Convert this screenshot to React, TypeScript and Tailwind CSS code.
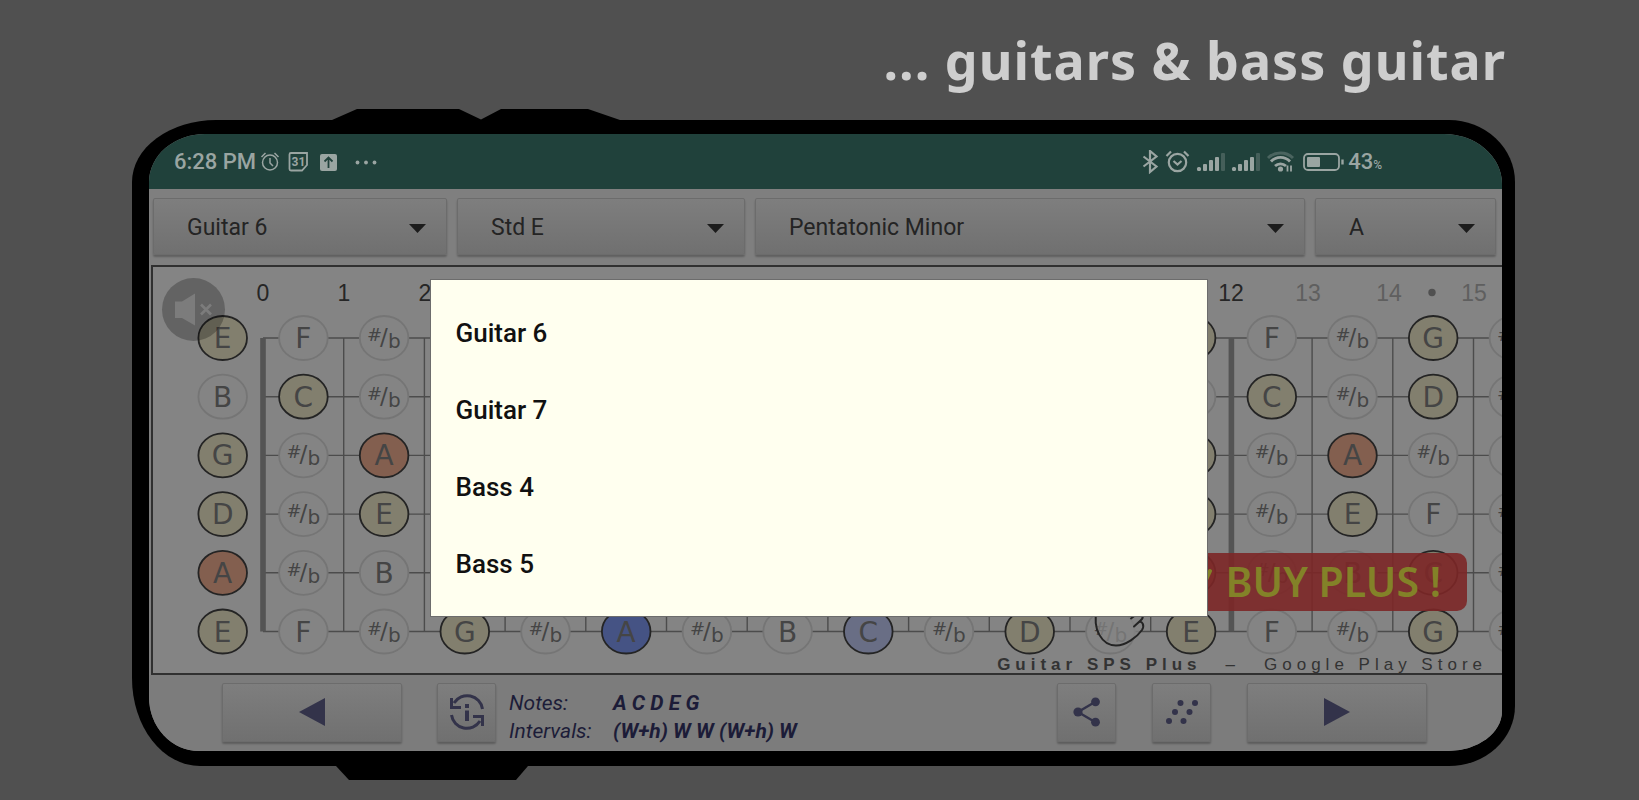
import React, { useState } from 'react';

const INSTRUMENTS = ['Guitar 6', 'Guitar 7', 'Bass 4', 'Bass 5'];

const NOTES = ['C', '#', 'D', '#', 'E', 'F', '#', 'G', '#', 'A', '#', 'B'];
const SCALE = ['A', 'C', 'D', 'E', 'G'];
// open strings from top to bottom, as indexes in NOTES
const STRINGS = [4, 11, 7, 2, 9, 4];

const NUT_X = 110;
const FRET_W = 80.7;
const STRING_Y = 71;
const STRING_H = 58.7;

const FRET_LABELS = [
  { n: 0, x: 110 }, { n: 1, x: 191 }, { n: 2, x: 272 }, { n: 3, x: 352 },
  { n: 5, x: 514 }, { n: 7, x: 675 }, { n: 9, x: 837 }, { n: 12, x: 1078 },
  { n: 13, x: 1155, dim: true }, { n: 14, x: 1236, dim: true }, { n: 15, x: 1321, dim: true },
];

const noteFill = (note: string, col: number) => {
  const inBox = col >= 5 && col <= 8;
  if (note === 'A') return inBox ? '#455384' : '#835f4f';
  if (!SCALE.includes(note)) return '#848484';
  return inBox ? '#696e85' : '#827f6e';
};

const Note: React.FC<{ note: string; x: number; y: number; col: number }> = ({ note, x, y, col }) => {
  const active = SCALE.includes(note);
  return (
    <g>
      <ellipse
        cx={x}
        cy={y}
        rx={24.3}
        ry={22}
        fill={noteFill(note, col)}
        stroke={active ? '#242424' : '#757575'}
        strokeWidth={1.8}
      />
      {note === '#' ? (
        <g fill="#454545" fontFamily='"DejaVu Sans", sans-serif'>
          <text x={x - 17} y={y + 3} fontSize="18">#</text>
          <text x={x - 4} y={y + 7} fontSize="23">/</text>
          <text x={x + 4} y={y + 10} fontSize="20">b</text>
        </g>
      ) : (
        <text x={x} y={y + 10} textAnchor="middle" fontSize="28" fill="#454545" fontFamily='"DejaVu Sans", sans-serif'>
          {note}
        </text>
      )}
    </g>
  );
};

const Fretboard: React.FC = () => {
  const frets = Array.from({ length: 17 }, (_, i) => i);
  return (
    <svg className="block h-full w-full" role="img" aria-label="Fretboard">
      {FRET_LABELS.map(({ n, x, dim }) => (
        <text key={n} x={x} y={34} textAnchor="middle" fontSize="23" fill={dim ? '#5f5f5f' : '#262626'} fontFamily='"Liberation Sans", sans-serif'>
          {n}
        </text>
      ))}
      <circle cx={1279} cy={25.5} r={3.7} fill="#505050" />

      {STRINGS.map((_, i) => (
        <line key={i} x1={NUT_X} x2="100%" y1={STRING_Y + i * STRING_H} y2={STRING_Y + i * STRING_H} stroke="#4c4c4c" strokeWidth={1.4} />
      ))}
      {frets.map((i) => (
        <line
          key={i}
          x1={NUT_X + i * FRET_W}
          x2={NUT_X + i * FRET_W}
          y1={STRING_Y}
          y2={STRING_Y + 5 * STRING_H}
          stroke={i % 12 === 0 ? '#545454' : '#4c4c4c'}
          strokeWidth={i % 12 === 0 ? 5.6 : 1.4}
        />
      ))}
      {STRINGS.map((open, s) =>
        frets.map((f) => (
          <Note key={`${s}-${f}`} note={NOTES[(open + f) % 12]} col={f} x={NUT_X - 40.3 + f * FRET_W} y={STRING_Y + s * STRING_H} />
        ))
      )}

      {/* pointing hand under the buy banner */}
      <path
        d="M943 345C940 362 949 378.500 963 378.500C973 378.500 984 370 989 363C992 359 990 355 986 354L981 359L989 352C991 347 987 344 984 347L978 351L983 345V340H943z"
        fill="#848484"
        fillOpacity={0.75}
      />
      <path
        d="M944 343C939 362 949 378.500 963 378.500C973 378.500 984 370 989 363C992 358 989 354 986 355L981 359.500M978 351.500L984 347C988 344 991 349 989 352L986 355"
        fill="none"
        stroke="#242424"
        strokeWidth={2}
        strokeLinecap="round"
      />
    </svg>
  );
};

const StatusIconsLeft: React.FC = () => (
  <svg className="h-6 w-[120px]" viewBox="0 0 120 24" fill="none" stroke="#9aa5a2" aria-hidden="true">
    <circle cx="10" cy="12.500" r="7.500" strokeWidth="1.500" />
    <path d="M10 8v5l3 3M1.500 7l4-4M18.500 7l-4-4" strokeWidth="1.500" />
    <path d="M31 3h16v12l-5 5.500H31a1.500 1.500 0 0 1-1.500-1.500V4.500A1.500 1.500 0 0 1 31 3z" strokeWidth="1.800" />
    <text x="38.500" y="16" textAnchor="middle" fontSize="12" fontWeight="700" fill="#9aa5a2" stroke="none" fontFamily="Roboto, sans-serif">31</text>
    <rect x="60" y="4" width="17" height="17" rx="2" fill="#9aa5a2" stroke="none" />
    <path d="M68.500 18V8M64.500 11.500l4-4 4 4" stroke="#20413b" strokeWidth="1.800" />
    <g fill="#9aa5a2" stroke="none">
      <circle cx="97.500" cy="12.500" r="1.900" />
      <circle cx="106" cy="12.500" r="1.900" />
      <circle cx="114.500" cy="12.500" r="1.900" />
    </g>
  </svg>
);

const Signal: React.FC<{ x: number }> = ({ x }) => (
  <g fill="#9aa5a2" stroke="none">
    <rect x={x} y="17" width="4" height="4" rx="1.500" />
    <rect x={x + 6} y="14" width="4" height="7" rx="1" />
    <rect x={x + 12} y="10" width="4" height="11" rx="1" />
    <rect x={x + 18} y="7" width="4" height="14" rx="1" />
    <rect x={x + 24} y="3" width="4" height="18" rx="1" opacity="0.3" />
  </g>
);

const StatusIconsRight: React.FC = () => (
  <svg className="h-6 w-[202px]" viewBox="0 0 202 24" fill="none" stroke="#9aa5a2" strokeWidth="2.200" aria-hidden="true">
    <path d="M1.500 6.500l13 10-6.500 5.500V1l6.500 5.500-13 10" />
    <circle cx="35.500" cy="12.500" r="8.700" />
    <path d="M31.500 11l4 3.500 4-3.500M24.500 6l4.500-4.500M46.500 6L42 1.500" />
    <Signal x={55} />
    <Signal x={90} />
    <path d="M126 8a18 18 0 0 1 25 0" opacity="0.35" strokeWidth="3" />
    <path d="M129 11.500a13 13 0 0 1 19 0M133 16a8 8 0 0 1 11 0" strokeWidth="2.800" />
    <circle cx="138.500" cy="19" r="2.600" fill="#9aa5a2" stroke="none" />
    <path d="M145.500 15.500v6M149 15.500v6" strokeWidth="1.800" />
    <rect x="162" y="4" width="35" height="16" rx="4" strokeWidth="1.800" />
    <rect x="165" y="7" width="13" height="10" rx="1" fill="#9aa5a2" stroke="none" />
    <path d="M200.500 9.500v5" strokeWidth="2.400" />
  </svg>
);

const Picker: React.FC<{ label: string; options: string[] }> = ({ label, options }) => (
  <div className="relative">
    <select
      aria-label={label}
      className="h-[57px] w-full appearance-none rounded-xs border border-[#6c6c6c] bg-linear-to-b from-[#7e7e7e] to-[#707070] pt-[4px] pl-[33px] text-[23px] text-[#242424] shadow-[0_2px_2px_rgba(0,0,0,0.25)]"
    >
      {options.map((o) => (
        <option key={o}>{o}</option>
      ))}
    </select>
    <svg className="pointer-events-none absolute top-[26px] right-[21px] h-[9px] w-[17px]" viewBox="0 0 17 9" aria-hidden="true">
      <path d="M0 0h17L8.500 9z" fill="#1c1c1c" />
    </svg>
  </div>
);

const ToolButton: React.FC<{ label: string; wide?: boolean; children: React.ReactNode }> = ({ label, wide, children }) => (
  <button
    aria-label={label}
    className={`flex h-[59px] shrink-0 items-center justify-center rounded-xs border border-[#6c6c6c] bg-linear-to-b from-[#7e7e7e] to-[#707070] shadow-[0_2px_2px_rgba(0,0,0,0.25)] ${wide ? 'w-[180px]' : 'w-[59px]'}`}
  >
    {children}
  </button>
);

const App: React.FC = () => {
  const [open, setOpen] = useState(true);

  return (
    <main className="relative min-h-screen overflow-hidden bg-[#505050] pr-[124px] pl-[132px] font-[Roboto,sans-serif]">
      <h1 className="h-[120px] pt-[28px] pr-[9px] text-right font-['Noto_Sans',sans-serif] text-[52px] leading-[64px] font-bold tracking-[1px] text-[#cecece]">
        ... guitars &amp; bass guitar
      </h1>

      <div className="relative rounded-[84px_66px_66px_68px/62px_62px_60px_88px] bg-black pt-[14px] pr-[13px] pb-[15px] pl-[17px]">
        <svg className="absolute -top-[11px] left-[200px] h-[12px] w-[289px]" viewBox="0 0 289 12" aria-hidden="true">
          <path d="M0 12V11L25 0H127L149 10.500L169 0H256L288 11V12z" fill="#000" />
        </svg>
        <svg className="absolute -bottom-[14px] left-[204px] h-[15px] w-[192px]" viewBox="0 0 192 15" aria-hidden="true">
          <path d="M0 0V1L13 15H180L192 1V0z" fill="#000" />
        </svg>

        <div className="overflow-hidden rounded-[56px_58px_54px_50px/48px_50px_40px_54px] bg-[#7f7f7f]">
          <div className="flex h-[55px] items-center bg-[#20413b] pl-[25px] text-[22px] font-medium text-[#9aa5a2]">
            <span>6:28 PM</span>
            <div className="ml-[4px]"><StatusIconsLeft /></div>
            <div className="mr-[4px] ml-auto"><StatusIconsRight /></div>
            <span className="mr-[120px]">43<span className="text-[12px]">%</span></span>
          </div>

          <div className="grid grid-cols-[294fr_288fr_550fr_181fr] gap-[10px] pt-[9px] pr-[6px] pb-[10px] pl-[4px]">
            <Picker label="Instrument" options={INSTRUMENTS} />
            <Picker label="Tuning" options={['Std E', 'Drop D']} />
            <Picker label="Scale" options={['Pentatonic Minor', 'Pentatonic Major']} />
            <Picker label="Root note" options={['A', 'B', 'C', 'D', 'E', 'F', 'G']} />
          </div>

          <div className="relative ml-[2px] h-[410px] overflow-hidden border-y-2 border-l-2 border-[#303030] bg-[#848484]">
            <Fretboard />
            <button aria-label="Sound off" className="absolute top-[11px] left-[9px] h-[63px] w-[63px] rounded-full bg-black/25">
              <svg className="h-full w-full" viewBox="0 0 63 63" aria-hidden="true">
                <path d="M13 23.500h7L33 15.500v32L20 40h-7z" fill="#7c7c7c" />
                <path d="M39 26.500l10 10M49 26.500l-10 10" stroke="#7c7c7c" strokeWidth="2.600" />
              </svg>
            </button>
            <button className="absolute right-[35px] bottom-[62px] flex h-[58px] items-center gap-[12px] rounded-[10px] bg-[#7c2727]/90 px-[26px] pb-[2px] font-['Noto_Sans',sans-serif] text-[41px] leading-none font-semibold text-[#838228]">
              <svg className="h-[30px] w-[30px]" viewBox="0 0 30 30" fill="none" stroke="#838228" strokeWidth="4" strokeLinecap="round" aria-hidden="true">
                <path d="M8 18l8 9L26 5" />
              </svg>
              BUY PLUS !
            </button>
            <p className="absolute right-[15px] bottom-0 flex items-baseline gap-[24px] font-['Liberation_Sans',sans-serif] text-[17px] leading-[17px] tracking-[5px] text-[#333333]">
              <b>Guitar SPS Plus</b>
              <span>–</span>
              <span>Google Play Store</span>
            </p>
          </div>

          <div className="flex h-[76px] items-center bg-[#7c7c7c] pr-[75px] pb-[2px] pl-[73px]">
            <ToolButton label="Previous" wide>
              <svg className="h-[28px] w-[26px]" viewBox="0 0 26 28" aria-hidden="true"><path d="M26 0v28L0 14z" fill="#33334a" /></svg>
            </ToolButton>
            <div className="ml-[35px] flex items-center gap-[13px]">
              <ToolButton label="Toggle info">
                <svg className="h-9 w-9" viewBox="0 0 36 36" fill="none" stroke="#33334a" strokeWidth="3" aria-hidden="true">
                  <path d="M5 9A15.500 15.500 0 0 1 33.500 15M31 27A15.500 15.500 0 0 1 2.500 21" />
                  <path d="M2.500 4v9.500H12M33.500 32v-9.500H24" />
                  <path d="M18 10v4M18 16.500V27" strokeWidth="4" />
                </svg>
              </ToolButton>
              <dl className="grid grid-cols-[104px_auto] pt-[10px] text-[21px] leading-[28px] text-[#1c1c38] italic">
                <dt>Notes:</dt>
                <dd className="font-bold">A C D E G</dd>
                <dt>Intervals:</dt>
                <dd className="font-bold">(W+h) W W (W+h) W</dd>
              </dl>
            </div>
            <div className="ml-auto flex items-center gap-[36px]">
              <ToolButton label="Share">
                <svg className="h-[30px] w-[28px]" viewBox="0 0 28 30" fill="#33334a" aria-hidden="true">
                  <path d="M22 5L5 15l17 10" fill="none" stroke="#33334a" strokeWidth="2.400" />
                  <circle cx="5" cy="15" r="4.600" />
                  <circle cx="22.500" cy="4.800" r="4.400" />
                  <circle cx="22.500" cy="25.200" r="4.400" />
                </svg>
              </ToolButton>
              <ToolButton label="Patterns">
                <svg className="h-6 w-8" viewBox="0 0 32 24" fill="#33334a" aria-hidden="true">
                  <circle cx="14.500" cy="3" r="3" /><circle cx="29" cy="3" r="3" />
                  <circle cx="9" cy="12" r="3" /><circle cx="23.500" cy="12" r="3" />
                  <circle cx="3" cy="21" r="3" /><circle cx="17.500" cy="21" r="3" />
                </svg>
              </ToolButton>
              <ToolButton label="Next" wide>
                <svg className="h-[28px] w-[26px]" viewBox="0 0 26 28" aria-hidden="true"><path d="M0 0v28l26-14z" fill="#33334a" /></svg>
              </ToolButton>
            </div>
          </div>
        </div>
      </div>

      {open && (
        <div className="absolute inset-0 flex items-start justify-center pt-[280px] pr-[2px]">
          <ul className="w-[776px] max-w-full bg-[#ffffef] py-[14px] outline outline-[#6c6c6c]">
            {INSTRUMENTS.map((name) => (
              <li key={name}>
                <button
                  onClick={() => setOpen(false)}
                  className="flex h-[77px] w-full items-center pt-[2px] pl-[25px] text-left text-[26px] font-medium text-[#111111]"
                >
                  {name}
                </button>
              </li>
            ))}
          </ul>
        </div>
      )}
    </main>
  );
};

export default App;
